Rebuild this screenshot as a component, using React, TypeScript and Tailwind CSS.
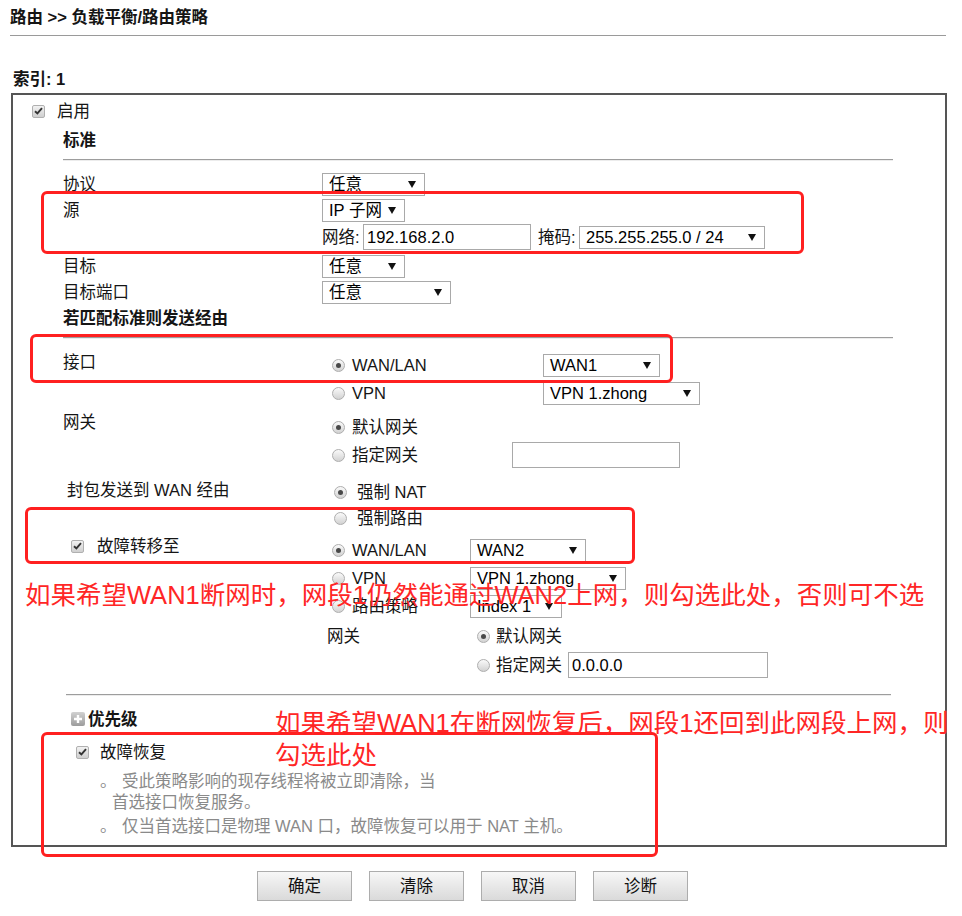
import React from 'react'

const font = "font-['Liberation_Sans','Noto_Sans_CJK_SC',sans-serif]"

function Check() {
  return (
    <span className="inline-flex h-[13px] w-[13px] shrink-0 items-center justify-center rounded-[2px] border border-[#b0b0b0] bg-linear-to-b from-[#f2f2f2] to-[#cfcfcf]">
      <svg width="9" height="8" viewBox="0 0 9 8">
        <path d="M1 4.2 L3.4 6.4 L8 1.2" fill="none" stroke="#333" strokeWidth="1.9" />
      </svg>
    </span>
  )
}

function Radio({ on }: { on?: boolean }) {
  return (
    <span className="inline-flex h-[13px] w-[13px] shrink-0 items-center justify-center rounded-full border border-[#aeaeae] bg-linear-to-b from-[#fafafa] to-[#d2d2d2]">
      {on && <span className="h-[5px] w-[5px] rounded-full bg-[#484848]" />}
    </span>
  )
}

function Sel({ w, text }: { w: string; text: string }) {
  return (
    <div className={`${w} flex h-[23px] shrink-0 items-center justify-between border border-[#a9a9a9] bg-white pl-[6px] pr-[8px] text-[16.5px] leading-none text-black`}>
      <span>{text}</span>
      <svg width="8" height="7" viewBox="0 0 8 7">
        <path d="M0 0H8L4 7Z" fill="#111" />
      </svg>
    </div>
  )
}

function Field({ w, value }: { w: string; value?: string }) {
  return (
    <div className={`${w} flex h-[26px] shrink-0 items-center border border-[#a9a9a9] bg-white px-[3px] text-[16.5px] leading-none text-black`}>
      {value}
    </div>
  )
}

function Btn({ label }: { label: string }) {
  return (
    <button className="h-[30px] w-[95px] border border-[#adadad] bg-linear-to-b from-[#f7f7f7] to-[#dadada] text-[16.5px] leading-none text-[#111]">
      {label}
    </button>
  )
}

export default function App() {
  return (
    <div className={`relative h-[916px] w-[962px] overflow-hidden bg-white text-[16.5px] text-[#151515] ${font}`}>
      <div className="pl-[10px] pt-[7px] text-[16.5px] font-bold leading-[20px]">路由 &gt;&gt; 负载平衡/路由策略</div>
      <div className="ml-[10px] mt-[8px] w-[936px] border-t border-[#9a9a9a]" />
      <div className="ml-[13px] mt-[33px] text-[16.5px] font-bold leading-[20px]">索引: 1</div>

      <div className="ml-[11px] mt-[4px] h-[754px] w-[936px] border-2 border-[#555]">
        <div className="mt-[5px] flex h-[22px] items-center pl-[19px]">
          <Check />
          <span className="ml-[12px] leading-[20px]">启用</span>
        </div>
        <div className="mt-[7px] flex h-[22px] items-center pl-[50px] font-bold">标准</div>
        <div className="ml-[50px] mt-[8px] w-[830px] border-t border-b border-t-[#9d9d9d] border-b-[#ececec]" />

        <div className="mt-[11px] flex h-[24px] items-center">
          <div className="w-[309px] shrink-0 pl-[50px]">协议</div>
          <Sel w="w-[103px]" text="任意" />
        </div>
        <div className="mt-[2px] flex h-[24px] items-center">
          <div className="w-[309px] shrink-0 pl-[50px]">源</div>
          <Sel w="w-[83px]" text="IP 子网" />
        </div>
        <div className="mt-[2px] flex h-[26px] items-center">
          <div className="w-[309px] shrink-0" />
          <span className="w-[41px] shrink-0">网络:</span>
          <Field w="w-[168px]" value="192.168.2.0" />
          <span className="ml-[7px] w-[41px] shrink-0">掩码:</span>
          <Sel w="w-[186px]" text="255.255.255.0 / 24" />
        </div>
        <div className="mt-[4px] flex h-[24px] items-center">
          <div className="w-[309px] shrink-0 pl-[50px]">目标</div>
          <Sel w="w-[83px]" text="任意" />
        </div>
        <div className="mt-[2px] flex h-[24px] items-center">
          <div className="w-[309px] shrink-0 pl-[50px]">目标端口</div>
          <Sel w="w-[129px]" text="任意" />
        </div>
        <div className="mt-[3px] flex h-[22px] items-center pl-[50px] font-bold">若匹配标准则发送经由</div>
        <div className="ml-[50px] mt-[8px] w-[830px] border-t border-b border-t-[#9d9d9d] border-b-[#ececec]" />

        <div className="mt-[14px] flex h-[24px] items-center">
          <div className="-mt-[6px] w-[309px] shrink-0 pl-[50px]">接口</div>
          <div className="ml-[10px] flex w-[211px] shrink-0 items-center">
            <Radio on />
            <span className="ml-[7px]">WAN/LAN</span>
          </div>
          <Sel w="w-[117px]" text="WAN1" />
        </div>
        <div className="mt-[4px] flex h-[24px] items-center">
          <div className="w-[309px] shrink-0" />
          <div className="ml-[10px] flex w-[211px] shrink-0 items-center">
            <Radio />
            <span className="ml-[7px]">VPN</span>
          </div>
          <Sel w="w-[157px]" text="VPN 1.zhong" />
        </div>
        <div className="mt-[10px] flex h-[24px] items-center">
          <div className="-mt-[10px] w-[309px] shrink-0 pl-[50px]">网关</div>
          <div className="ml-[10px] flex items-center">
            <Radio on />
            <span className="ml-[7px]">默认网关</span>
          </div>
        </div>
        <div className="mt-[2px] flex h-[28px] items-center">
          <div className="w-[309px] shrink-0" />
          <div className="ml-[10px] flex w-[180px] shrink-0 items-center">
            <Radio />
            <span className="ml-[7px]">指定网关</span>
          </div>
          <Field w="w-[168px]" />
        </div>
        <div className="mt-[11px] flex h-[24px] items-center">
          <div className="-mt-[4px] w-[309px] shrink-0 pl-[54px]">封包发送到 WAN 经由</div>
          <div className="ml-[12px] flex items-center">
            <Radio on />
            <span className="ml-[10px]">强制 NAT</span>
          </div>
        </div>
        <div className="mt-[2px] flex h-[24px] items-center">
          <div className="w-[309px] shrink-0" />
          <div className="ml-[12px] flex items-center">
            <Radio />
            <span className="ml-[10px]">强制路由</span>
          </div>
        </div>
        <div className="mt-[8px] flex h-[24px] items-center">
          <div className="-mt-[8px] flex w-[309px] shrink-0 items-center pl-[58px]">
            <Check />
            <span className="ml-[13px]">故障转移至</span>
          </div>
          <div className="ml-[10px] flex w-[138px] shrink-0 items-center">
            <Radio on />
            <span className="ml-[7px]">WAN/LAN</span>
          </div>
          <Sel w="w-[116px]" text="WAN2" />
        </div>
        <div className="mt-[4px] flex h-[24px] items-center">
          <div className="w-[309px] shrink-0" />
          <div className="ml-[10px] flex w-[138px] shrink-0 items-center">
            <Radio />
            <span className="ml-[7px]">VPN</span>
          </div>
          <Sel w="w-[156px]" text="VPN 1.zhong" />
        </div>
        <div className="mt-[4px] flex h-[24px] items-center">
          <div className="w-[309px] shrink-0" />
          <div className="ml-[10px] flex w-[138px] shrink-0 items-center">
            <Radio />
            <span className="ml-[7px]">路由策略</span>
          </div>
          <Sel w="w-[92px]" text="Index 1" />
        </div>
        <div className="mt-[6px] flex h-[24px] items-center">
          <div className="w-[314px] shrink-0" />
          <div className="w-[150px] shrink-0">网关</div>
          <div className="flex items-center">
            <Radio on />
            <span className="ml-[6px]">默认网关</span>
          </div>
        </div>
        <div className="mt-[3px] flex h-[28px] items-center">
          <div className="w-[464px] shrink-0" />
          <div className="flex w-[91px] shrink-0 items-center">
            <Radio />
            <span className="ml-[6px]">指定网关</span>
          </div>
          <Field w="w-[200px]" value="0.0.0.0" />
        </div>
        <div className="ml-[53px] mt-[15px] w-[825px] border-t border-b border-t-[#9d9d9d] border-b-[#ececec]" />

        <div className="mt-[12px] flex h-[22px] items-center pl-[58px]">
          <span className="flex h-[14px] w-[14px] shrink-0 items-center justify-center rounded-[2px] bg-linear-to-b from-[#d2d2d2] to-[#9c9c9c]">
            <svg width="10" height="10" viewBox="0 0 10 10">
              <path d="M5 1V9M1 5H9" stroke="#fff" strokeWidth="2.4" />
            </svg>
          </span>
          <span className="ml-[3px] font-bold">优先级</span>
        </div>
        <div className="mt-[11px] flex h-[22px] items-center pl-[63px]">
          <Check />
          <span className="ml-[11px]">故障恢复</span>
        </div>
        <div className="text-[#8a8a8a]">
          <div className="mt-[7px] flex h-[22px] items-center pl-[87px]">
            <span className="w-[22px] shrink-0">。</span>
            <span>受此策略影响的现存线程将被立即清除，当</span>
          </div>
          <div className="flex h-[20px] items-center pl-[99px]">首选接口恢复服务。</div>
          <div className="mt-[3px] flex h-[22px] items-center pl-[87px]">
            <span className="w-[22px] shrink-0">。</span>
            <span>仅当首选接口是物理 WAN 口，故障恢复可以用于 NAT 主机。</span>
          </div>
        </div>
      </div>

      <div className="mt-[24px] flex gap-[17px] pl-[257px]">
        <Btn label="确定" />
        <Btn label="清除" />
        <Btn label="取消" />
        <Btn label="诊断" />
      </div>

      {/* annotations drawn on top of the screenshot */}
      <div className="pointer-events-none absolute left-[41px] top-[191px] h-[63px] w-[763px] rounded-[6px] border-[3px] border-[#ff2020]" />
      <div className="pointer-events-none absolute left-[30px] top-[334px] h-[49px] w-[643px] rounded-[6px] border-[3px] border-[#ff2020]" />
      <div className="pointer-events-none absolute left-[25px] top-[507px] h-[57px] w-[610px] rounded-[6px] border-[3px] border-[#ff2020]" />
      <div className="pointer-events-none absolute left-[41px] top-[732px] h-[125px] w-[617px] rounded-[6px] border-[3px] border-[#ff2020]" />
      <div className="pointer-events-none absolute left-[25px] top-[579px] whitespace-nowrap text-[25.5px] leading-[32px] text-[#ff2626]">
        如果希望WAN1断网时，网段1仍然能通过WAN2上网，则勾选此处，否则可不选
      </div>
      <div className="pointer-events-none absolute left-[275px] top-[707px] whitespace-nowrap text-[25.5px] leading-[32px] text-[#ff2626]">
        如果希望WAN1在断网恢复后，网段1还回到此网段上网，则
        <br />
        勾选此处
      </div>
    </div>
  )
}
